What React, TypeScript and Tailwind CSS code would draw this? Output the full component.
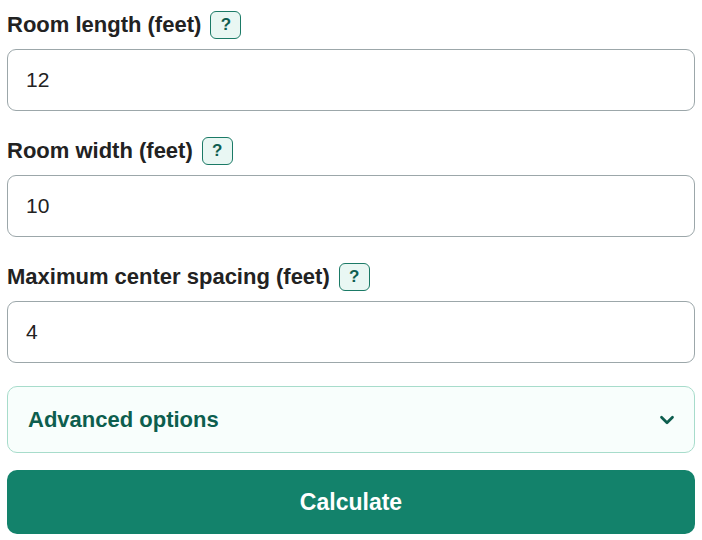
import { ChevronDown } from 'lucide-react'

const FIELDS = [
  { label: 'Room length (feet)', value: '12' },
  { label: 'Room width (feet)', value: '10' },
  { label: 'Maximum center spacing (feet)', value: '4' },
]

function HelpBadge() {
  return (
    <button
      type="button"
      className="flex h-[28px] w-[31px] items-center justify-center rounded-[6px] border-[1.5px] border-[#1b7a66] bg-[#e9f7f3] text-[17px] font-bold text-[#0f5e50]"
    >
      ?
    </button>
  )
}

export default function App() {
  return (
    <div className="w-[702px] bg-white px-[7px] pt-[11px] font-['Liberation_Sans',Arial,sans-serif] text-[#222]">
      {FIELDS.map((f) => (
        <div key={f.label} className="mb-[26px] flex flex-col">
          <div className="flex h-[28px] items-center gap-[9px]">
            <span className="text-[22px] font-bold leading-none">{f.label}</span>
            <HelpBadge />
          </div>
          <input
            defaultValue={f.value}
            className="mt-[10px] h-[62px] w-full rounded-[9px] border-[1.5px] border-[#9ca7aa] bg-white px-[18px] text-[21px] text-[#222] outline-none"
          />
        </div>
      ))}

      <div className="mt-[-3px] flex h-[67px] items-center justify-between rounded-[10px] border-[1.5px] border-[#a7dccb] bg-[#f8fefc] pl-[20px] pr-[16px]">
        <span className="text-[22px] font-bold text-[#0d5e4e]">Advanced options</span>
        <ChevronDown className="h-[22px] w-[22px] text-[#0d5e4e]" strokeWidth={3} />
      </div>

      <button
        type="button"
        className="mt-[17px] flex h-[64px] w-full items-center justify-center rounded-[10px] bg-[#13826b] text-[23px] font-bold text-white"
      >
        Calculate
      </button>
    </div>
  )
}
